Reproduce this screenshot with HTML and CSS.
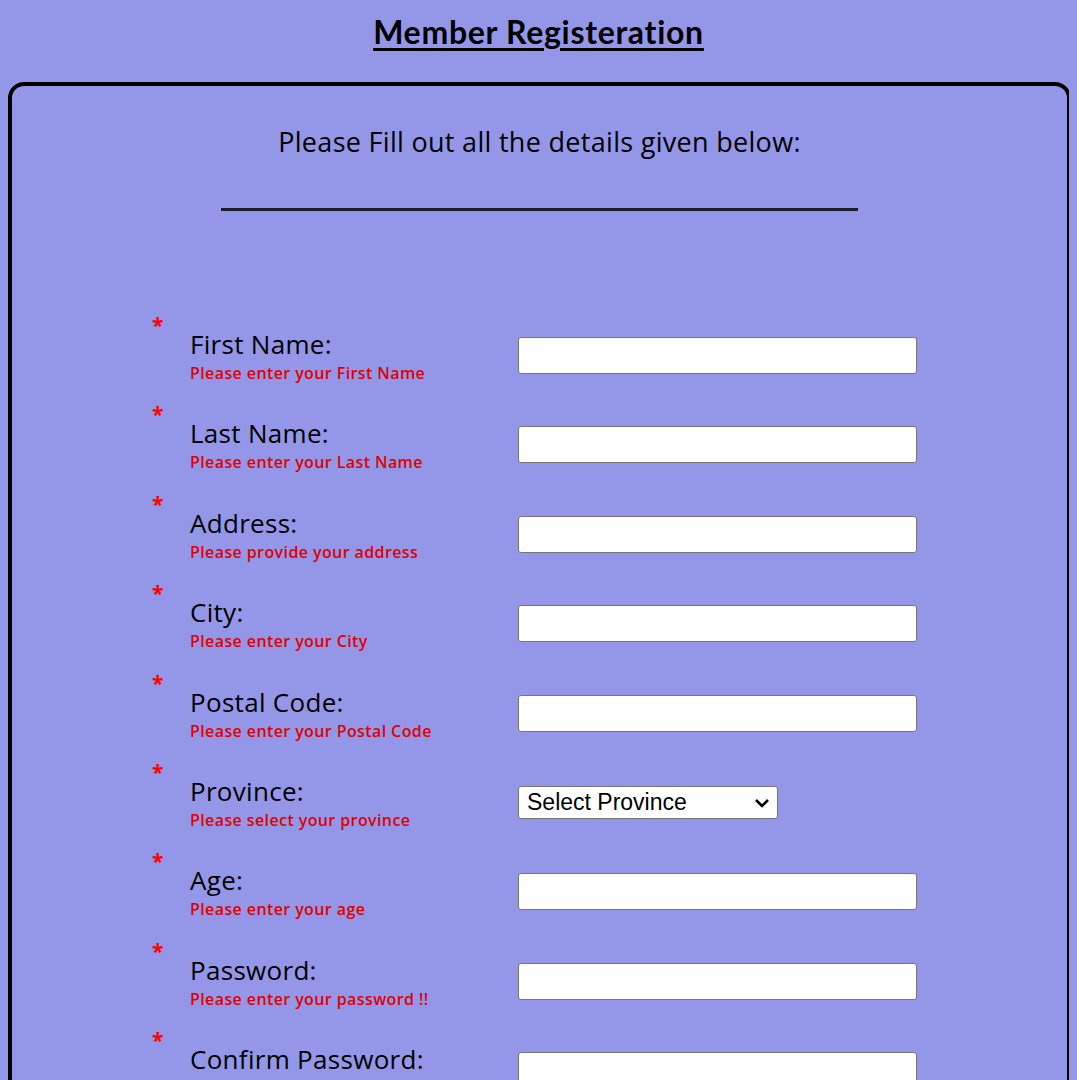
FILE: index.html
```html
<!DOCTYPE html>
<html>
<head>
<meta charset="utf-8">
<title>Member Registeration</title>
<link rel="stylesheet" href="styles.css">
</head>
<body>
<h1 class="title">Member Registeration</h1>
<div class="box">
  <p class="intro">Please Fill out all the details given below:</p>
  <hr class="rule">
  <form class="form">
    <div class="row"><span class="req">*</span><div class="lbl"><div class="name">First Name:</div><div class="err">Please enter your First Name</div></div><input class="field" type="text"></div>
    <div class="row"><span class="req">*</span><div class="lbl"><div class="name">Last Name:</div><div class="err">Please enter your Last Name</div></div><input class="field" type="text"></div>
    <div class="row"><span class="req">*</span><div class="lbl"><div class="name">Address:</div><div class="err">Please provide your address</div></div><input class="field" type="text"></div>
    <div class="row"><span class="req">*</span><div class="lbl"><div class="name">City:</div><div class="err">Please enter your City</div></div><input class="field" type="text"></div>
    <div class="row"><span class="req">*</span><div class="lbl"><div class="name">Postal Code:</div><div class="err">Please enter your Postal Code</div></div><input class="field" type="text"></div>
    <div class="row"><span class="req">*</span><div class="lbl"><div class="name">Province:</div><div class="err">Please select your province</div></div><div class="selwrap"><select class="sel"><option>Select Province</option></select><svg class="chev" width="16" height="10" viewBox="0 0 16 10"><path d="M2 2 L8 8 L14 2" fill="none" stroke="#000" stroke-width="2.6"/></svg></div></div>
    <div class="row"><span class="req">*</span><div class="lbl"><div class="name">Age:</div><div class="err">Please enter your age</div></div><input class="field" type="text"></div>
    <div class="row"><span class="req">*</span><div class="lbl"><div class="name">Password:</div><div class="err">Please enter your password !!</div></div><input class="field" type="password"></div>
    <div class="row"><span class="req">*</span><div class="lbl"><div class="name">Confirm Password:</div><div class="err">Please confirm your password</div></div><input class="field" type="password"></div>
  </form>
</div>
</body>
</html>
```
FILE: styles.css
```css
body {
  margin: 8px;
  background: #9497e8;
  font-family: "Open Sans", "DejaVu Sans", sans-serif;
  color: #000;
}
.title {
  text-align: center;
  font-family: "Lato", "Open Sans", sans-serif;
  font-size: 32px;
  font-weight: bold;
  letter-spacing: 0.7px;
  text-decoration: underline;
  text-decoration-thickness: 3px;
  text-underline-offset: 4px;
  margin: 6px 0 0;
  line-height: 36px;
}
.box {
  margin-top: 32px;
  margin-right: -2px;
  border: 4px solid #000;
  border-radius: 16px;
  padding: 0 0 40px;
}
.intro {
  text-align: center;
  font-size: 27px;
  letter-spacing: 0.3px;
  margin: 40px 0 0;
  line-height: 32px;
}
.rule {
  width: 637px;
  margin: 50px auto 0;
  border: 0;
  border-top: 3px solid #1c1c2a;
  height: 0;
}
.form {
  padding-left: 140px;
  margin-top: 117px;
  display: flex;
  flex-direction: column;
  gap: 34.4px;
}
.row {
  display: grid;
  grid-template-columns: 38px 328px 400px;
  align-items: center;
}
.req {
  align-self: start;
  color: #f00;
  font-size: 21px;
  font-weight: bold;
  line-height: 20px;
  margin-top: -13px;
}
.name {
  font-size: 26px;
  letter-spacing: 0.3px;
  line-height: 32px;
}
.err {
  color: #e00000;
  font-size: 16px;
  font-weight: 600;
  line-height: 20px;
  letter-spacing: 0.4px;
  margin-top: 3px;
}
.field {
  box-sizing: border-box;
  width: 399px;
  height: 37px;
  margin: 0;
  border: 1px solid #767676;
  border-radius: 3px;
  background: #fff;
}
.selwrap {
  position: relative;
  width: 260px;
  height: 33px;
}
.sel {
  appearance: none;
  -webkit-appearance: none;
  box-sizing: border-box;
  width: 260px;
  height: 33px;
  margin: 0;
  padding: 0 0 0 8px;
  font-family: "Liberation Sans", Arial, sans-serif;
  font-size: 23px;
  border: 1px solid #767676;
  border-radius: 3px;
  background: #fff;
  color: #000;
}
.chev {
  position: absolute;
  right: 8px;
  top: 12px;
  pointer-events: none;
}
```
